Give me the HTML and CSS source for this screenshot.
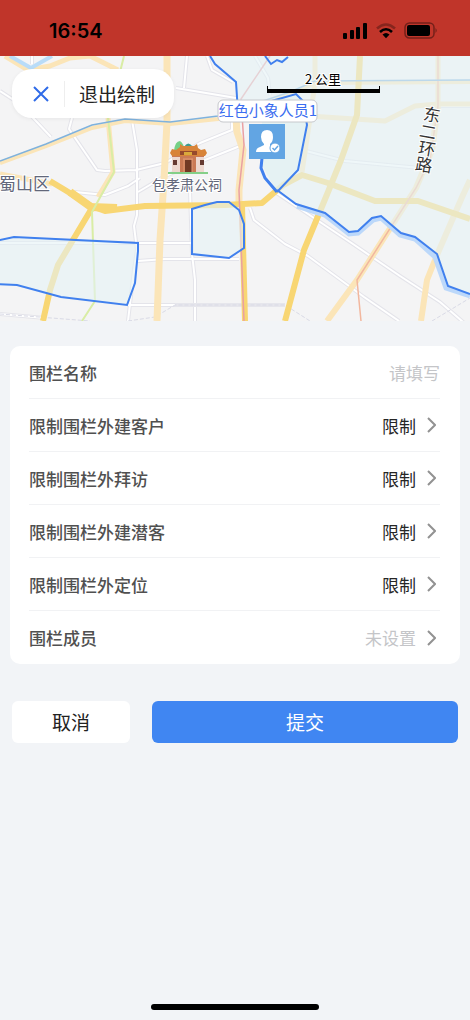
FILE: index.html
```html
<!DOCTYPE html>
<html lang="zh-CN">
<head>
    <meta charset="UTF-8">
    <meta name="viewport" content="width=device-width, initial-scale=1.0">
    <title>绘制围栏</title>
    <link rel="stylesheet" href="styles.css">
</head>
<body>
    <header class="status-bar">
        <span class="time">16:54</span>
        <div class="status-icons">
            <svg width="25" height="16" viewBox="0 0 25 16">
                <rect x="0" y="10" width="4" height="6" rx="1"/>
                <rect x="7" y="7" width="4" height="9" rx="1"/>
                <rect x="13" y="4" width="4" height="12" rx="1"/>
                <rect x="20" y="0" width="4" height="16" rx="1"/>
            </svg>
            <svg width="20" height="16" viewBox="0 0 20 16" fill="none" stroke="#000" stroke-width="2.6">
                <path d="M1 5.5Q10-2.500 19 5.500" opacity=".3"/>
                <path d="M4 9Q10 3.500 16 9"/>
                <path d="M6.500 11.500Q10 8.500 13.500 11.500L10 15.200Z" fill="#000" stroke="none"/>
            </svg>
            <svg width="34" height="18" viewBox="0 0 34 18">
                <rect x="1" y="1" width="29" height="15" rx="4.500" fill="none" stroke="#000" stroke-width="1.500" opacity=".4"/>
                <rect x="3" y="3" width="23" height="11" rx="2"/>
                <path d="M31.500 6Q34 8.500 31.500 11Z" opacity=".4"/>
            </svg>
        </div>
    </header>

    <!-- Mapa -->
    <section class="map">
        <svg class="map-canvas" viewBox="0 56 470 265" preserveAspectRatio="xMidYMid slice">
            <defs>
                <path id="calles" d="M0 91L20 104L51 137M72 118L69 129L97 170L105 171L136 170L165 163L200 143L232 130V118M32 56V64M132 120L137 150V215L134 226L137 250L134 270L128 321M176 88L236 98M187 56L184 88M207 56L212 70L233 82M138 192L165 176L205 160L240 146M190 190L192 254L195 280V321M0 243H192M138 261L165 259H239M127 305H175M250 208L254 220L285 244L308 256L364 297L399 321M275 192L296 206L350 242L400 276L440 302L470 328M75 192L105 195L128 186L140 178M255 56L268 78L270 95M306 151L345 161L420 168M438 106H470M0 314L45 318"/>
            </defs>
            <rect x="0" y="56" width="470" height="265" fill="#f4f4f5"/>
            <use href="#calles" class="road-edge"/>
            <use href="#calles" class="road-white"/>
            <path d="M175 305H285" fill="none" stroke="#e6e6ec" stroke-width="4"/>
            <path d="M0 314L90 321M128 321L155 317L175 305H285L310 321M432 321L470 298" fill="none" stroke="#d9dae6" stroke-dasharray="4 2"/>

            <g class="road-light">
                <path d="M0 163L46 146L92 128L125 121L170 124L218 119L245 113L290 94L315 83L470 82" stroke-width="4"/>
                <path d="M167 56V122L164 180L160 240L157 321" stroke-width="7"/>
                <path d="M108 118L113 172L98 197" stroke-width="5"/>
                <path d="M5 56L28 70L50 66L70 58L90 56L118 70M0 174L52 184" stroke-width="5"/>
                <path d="M236 118L237 132L243 150L239 190V205" stroke-width="7"/>
                <path d="M315 56V83L309 125L302 172M309 116L385 121L415 106L438 104H470M438 56V106" stroke-width="5"/>
                <path d="M438 106L432 150L416 188L357 280L327 321M470 180L463 195L437 255L427 280L421 321" stroke-width="6"/>
            </g>
            <g class="road-main">
                <path d="M50 181L65 190L91 206L105 211L145 206L225 205L262 203L283 185L302 175L328 183L375 201H418L470 219" stroke-width="6"/>
                <path d="M70 192L91 207L117 208" stroke-width="8"/>
                <path d="M92 208L58 265L50 290L43 321" stroke-width="6"/>
                <path d="M242 205L245 321" stroke-width="6"/>
                <path d="M360 56L357 115L341 160L328 192L304 250L285 321" stroke-width="6"/>
            </g>
            <path d="M124 56L121 68L108 118L114 172L92 212L95 301L82 321" fill="none" stroke="#d9eda5" stroke-width="2"/>
            <path d="M270 56L241 99L244 145L239 190L244 321" fill="none" stroke="#e9a0a3" stroke-width="1.500"/>
            <path d="M438 56V106L430 160L416 188L357 280L361 321" fill="none" stroke="#f2b79e" stroke-width="1.500"/>
            <path d="M0 161L46 144L92 125L125 119L170 122L218 116L290 92L315 81L470 80" fill="none" stroke="#7fb2dd" stroke-width="1.500"/>
            <path d="M10 56L31 68L52 56" fill="none" stroke="#b9dcf8" stroke-width="4"/>

            <!-- Cercas -->
            <path d="M297 206L325 215L349 234L358 233L373 220L381 218L400 235L415 239L435 257L446 288L470 296" fill="none" stroke="#bcd8fa" stroke-width="5"/>
            <path d="M210 56L236 82L238 112L262 104L262 165L277 192L296 204L325 213L349 232L358 231L372 218L381 216L401 233L415 237L437 254L448 286L470 294V56Z" fill="#e5f2f5" fill-opacity=".6"/>
            <path d="M262 110L296 94L303 101L308 120L298 170L277 192L262 165Z" fill="#dff2f1" fill-opacity=".5"/>
            <g class="fence">
                <path d="M210 56L215 64L236 82L238 112M265 56L271 64L277 60L282 62L288 57"/>
                <path d="M268 102L296 94L303 101L307 125L298 170L277 192"/>
                <path d="M262 158L261 168L265 178L277 192" stroke-width="3"/>
                <path d="M277 190L296 204L325 213L349 232L358 231L372 218L381 216L401 233L415 237L437 254L448 286L470 294"/>
                <path class="fence-area" d="M-5 241L14 237L138 243V251L135 283L127 305L61 297L17 285L-5 284Z"/>
                <path class="fence-area" d="M192 209L205 205L217 202H229L239 210L244 224V248L229 258L192 254Z"/>
            </g>

            <!-- Icono del templo -->
            <g>
                <path d="M174 151Q175 141 180 141Q184 143 184 151Z" fill="#74d086"/>
                <path d="M184 147Q188 140 193 147Z" fill="#3d9b8f"/>
                <path d="M172 154H204V172H172Z" fill="#edd8cf"/>
                <path d="M172 154H204V157H172ZM180 151H196V172H180Z" fill="#ca7a55"/>
                <path d="M170 153L172 149L176 150L180 147L180 144L183 146H194L197 144L198 148L201 150L205 149L207 153L205 156H172Z" fill="#d88439"/>
                <path d="M180 151H197V155H180Z" fill="#964a2c"/>
                <path d="M184 152H192V155H184Z" fill="#d9a93c"/>
                <path d="M185 160H192V172H185Z" fill="#713924"/>
                <path d="M183 159H193M184 159V172M192 159V172" fill="none" stroke="#e29a74"/>
                <path d="M173 160H177V165H173ZM200 160H204V165H200Z" fill="#653a31"/>
                <path d="M168 173H208" stroke="#84cf88" stroke-width="2"/>
            </g>
            <g class="map-label">
                <text x="-1" y="190" font-size="17">蜀山区</text>
                <text x="152" y="190" font-size="14">包孝肃公祠</text>
            </g>
            <g class="map-road-name">
                <text transform="translate(432 115) rotate(10)" y="6">东</text>
                <text transform="translate(428 132) rotate(10)" y="6">二</text>
                <text transform="translate(427 149) rotate(10)" y="6">环</text>
                <text transform="translate(424 165) rotate(10)" y="6">路</text>
            </g>
            <text class="map-scale" x="323" y="84">2 公里</text>
            <path d="M267 86V93H380V86H379V89H268V86Z"/>

            <!-- Marcador de la persona -->
            <rect x="249" y="124" width="36" height="35" fill="#62a5e3"/>
            <path d="M267 130Q273 130 273 137Q273 142 270 144V146L278 150V152H256Q256 148 260 147L264 145V144Q261 141 261 137Q261 130 267 130Z" fill="#fff"/>
            <circle cx="275" cy="148" r="5" fill="#fff" stroke="#62a5e3"/>
            <path d="M272.500 148L274.500 150L278 146" fill="none" stroke="#62a5e3" stroke-width="1.500"/>
            <rect x="218" y="100" width="99" height="22" rx="5" fill="#fff" stroke="#c6c8cc"/>
            <text class="map-person" x="268" y="116">红色小象人员1</text>
        </svg>
        <button class="exit" type="button">
            <svg width="16" height="16" viewBox="0 0 16 16" fill="none" stroke="#2f6be8" stroke-width="2">
                <path d="M1 1L15 15M15 1L1 15"/>
            </svg>
            <span class="exit-text">退出绘制</span>
        </button>
    </section>

    <form class="form">
        <div class="card">
            <div class="row">
                <label for="nombre">围栏名称</label>
                <input id="nombre" type="text" placeholder="请填写">
            </div>
            <div class="row">
                <label for="cliente">限制围栏外建客户</label>
                <select id="cliente"><option>限制</option><option>不限制</option></select>
                <svg class="arrow" viewBox="0 0 9 16"><path d="M1 1L8 8L1 15"/></svg>
            </div>
            <div class="row">
                <label for="visita">限制围栏外拜访</label>
                <select id="visita"><option>限制</option><option>不限制</option></select>
                <svg class="arrow" viewBox="0 0 9 16"><path d="M1 1L8 8L1 15"/></svg>
            </div>
            <div class="row">
                <label for="potencial">限制围栏外建潜客</label>
                <select id="potencial"><option>限制</option><option>不限制</option></select>
                <svg class="arrow" viewBox="0 0 9 16"><path d="M1 1L8 8L1 15"/></svg>
            </div>
            <div class="row">
                <label for="ubicacion">限制围栏外定位</label>
                <select id="ubicacion"><option>限制</option><option>不限制</option></select>
                <svg class="arrow" viewBox="0 0 9 16"><path d="M1 1L8 8L1 15"/></svg>
            </div>
            <div class="row">
                <label for="miembros">围栏成员</label>
                <button id="miembros" class="members" type="button">未设置</button>
                <svg class="arrow" viewBox="0 0 9 16"><path d="M1 1L8 8L1 15"/></svg>
            </div>
        </div>
        <div class="actions">
            <button class="cancel" type="button">取消</button>
            <button class="submit" type="submit">提交</button>
        </div>
    </form>

    <div class="home-indicator"></div>
</body>
</html>
```

FILE: styles.css
```css
* {
    box-sizing: border-box;
}
body {
    font-family: "Noto Sans CJK SC", sans-serif;
    background-color: #f2f4f7;
    margin: 0;
    min-height: 100vh;
    display: flex;
    flex-direction: column;
}
button, input, select {
    font-family: inherit;
    border: none;
    background: none;
    padding: 0;
    margin: 0;
}
button {
    cursor: pointer;
}
.status-bar {
    display: flex;
    justify-content: space-between;
    align-items: center;
    height: 56px;
    padding: 6px 32px 0 49px;
    background-color: #c0352a;
}
.time {
    font-family: Inter, sans-serif;
    font-size: 20px;
    font-weight: 600;
}
.status-icons {
    display: flex;
    align-items: center;
    gap: 8px;
}
/* mapa */
.map {
    position: relative;
    height: 265px;
}
.map-canvas {
    display: block;
    width: 100%;
    height: 100%;
}
.road-edge, .road-white, .road-light, .road-main {
    fill: none;
    stroke-linejoin: round;
}
.road-edge {
    stroke: #e4e4ea;
    stroke-width: 4;
}
.road-white {
    stroke: #fff;
    stroke-width: 2;
}
.road-light {
    stroke: #fbe5b8;
}
.road-main {
    stroke: #f8d673;
}
.fence {
    fill: none;
    stroke: #4080ee;
    stroke-width: 2;
}
.fence-area {
    fill: rgba(229, 242, 245, 0.6);
}
.map-label {
    fill: #62677a;
    stroke: #fff;
    stroke-width: 2;
    paint-order: stroke;
}
.map-road-name {
    font-size: 17px;
    text-anchor: middle;
    fill: #333;
    stroke: #fff;
    stroke-width: 2;
    paint-order: stroke;
}
.map-scale {
    font-size: 13px;
    text-anchor: middle;
    stroke: #fff;
    stroke-width: 2;
    paint-order: stroke;
}
.map-person {
    font-size: 15px;
    text-anchor: middle;
    fill: #3a6df0;
}
.exit {
    position: absolute;
    top: 13px;
    left: 12px;
    display: flex;
    align-items: center;
    height: 49px;
    padding: 0 19px 0 21px;
    gap: 15px;
    background-color: #fff;
    border-radius: 20px;
    box-shadow: 0 1px 4px rgba(0, 0, 0, 0.06);
}
.exit-text {
    padding-left: 14px;
    border-left: 1px solid #eee;
    font-size: 19px;
    line-height: 26px;
    color: #222;
}
/* formulario */
.form {
    padding: 25px 10px;
}
.card {
    background-color: #fff;
    border-radius: 10px;
    padding: 0 20px 0 19px;
}
.row {
    display: flex;
    align-items: center;
    height: 53px;
    border-bottom: 1px solid #f1f2f4;
    font-size: 17px;
}
.row:last-child {
    border-bottom: none;
}
.row label {
    flex: 1;
    white-space: nowrap;
    font-weight: 500;
    color: #505050;
}
.row input, .row select, .members {
    font-size: 17px;
    text-align: right;
    outline: none;
}
.row input {
    width: 160px;
}
.row input::placeholder, .members {
    color: #c4c5c8;
    opacity: 1;
}
.row select {
    appearance: none;
    text-align-last: right;
    color: #262626;
}
.arrow {
    width: 9px;
    height: 16px;
    margin: 0 4px 0 11px;
    fill: none;
    stroke: #929292;
    stroke-width: 2;
}
.actions {
    display: flex;
    gap: 22px;
    padding: 37px 2px 0;
}
.cancel, .submit {
    height: 42px;
    padding-bottom: 2px;
    border-radius: 6px;
    font-size: 19px;
}
.cancel {
    width: 118px;
    background-color: #fff;
    color: #222;
}
.submit {
    flex: 1;
    background-color: #4086f2;
    color: #fff;
}
.home-indicator {
    width: 168px;
    height: 6px;
    margin: auto auto 10px;
    border-radius: 3px;
    background-color: #000;
}
```
